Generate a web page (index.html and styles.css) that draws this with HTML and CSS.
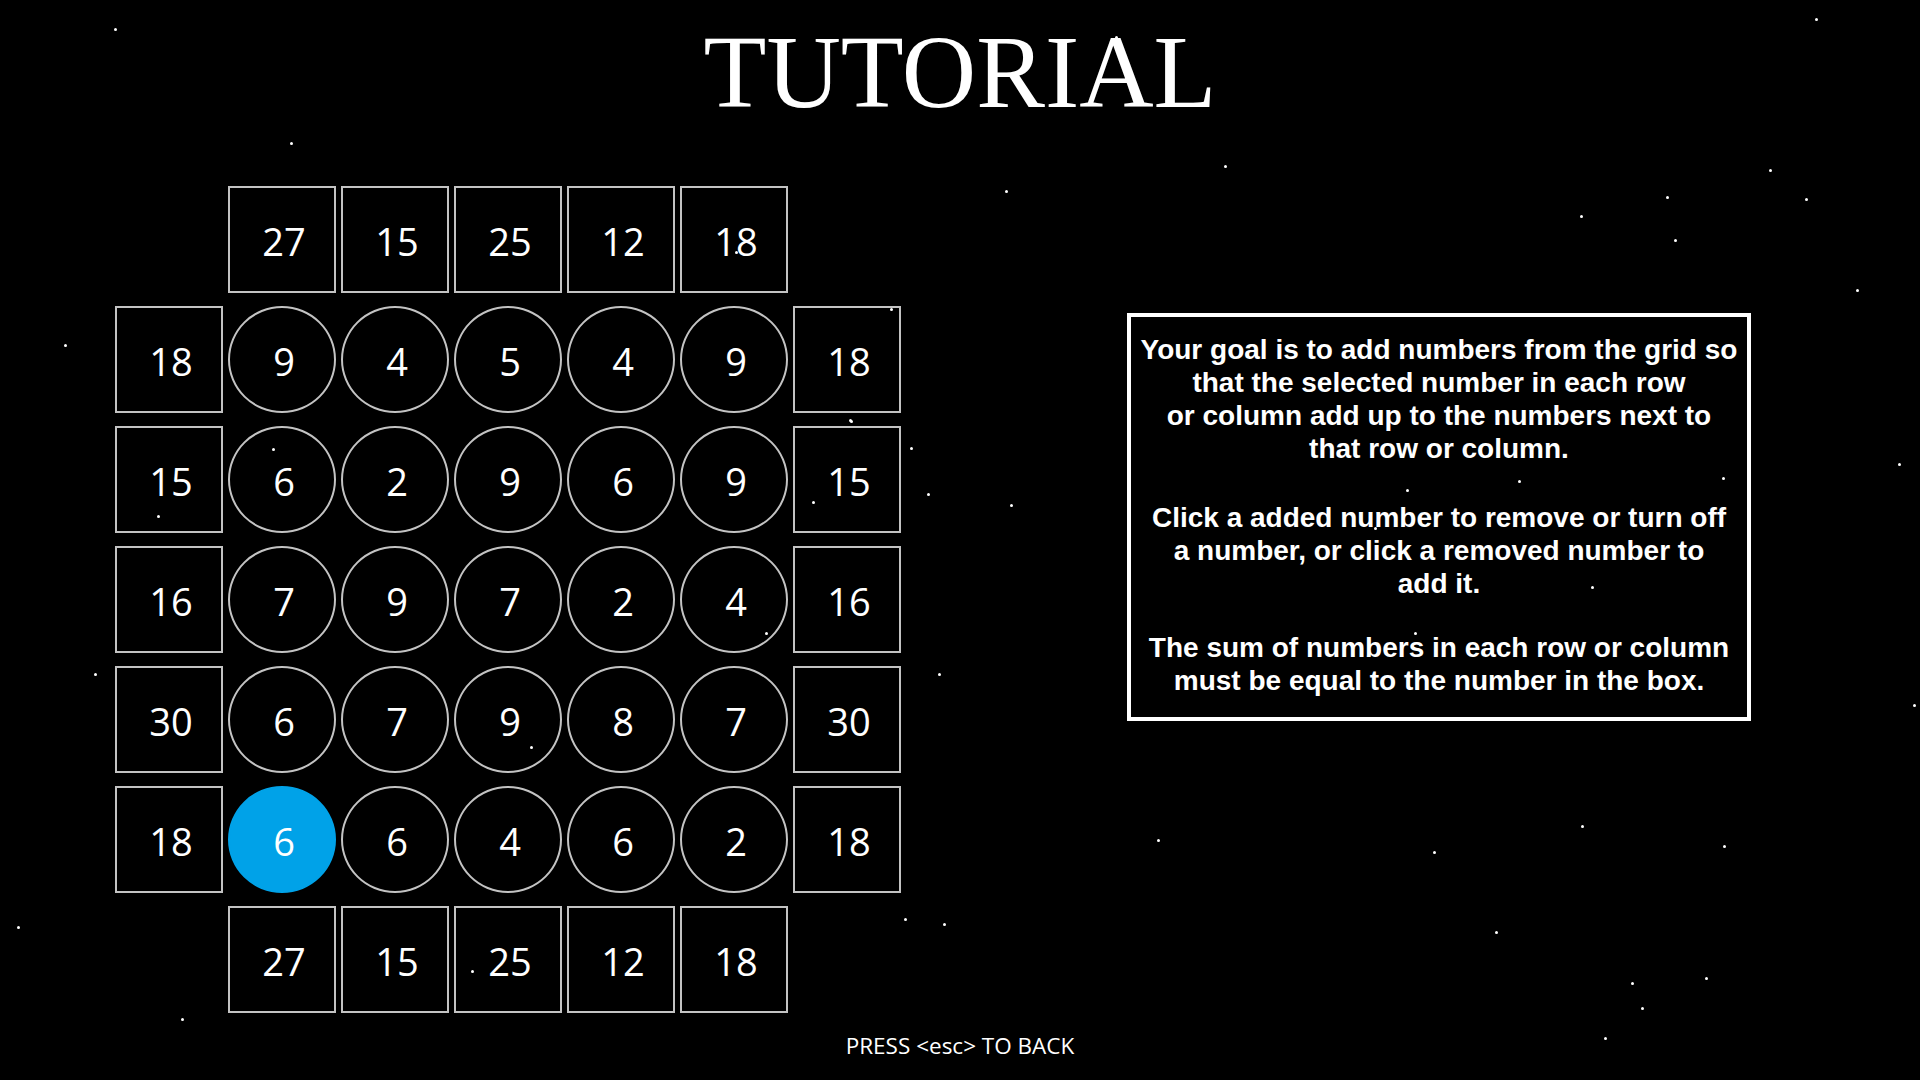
FILE: index.html
```html
<!DOCTYPE html>
<html lang="en">
<head>
<meta charset="utf-8">
<title>Tutorial</title>
<link rel="stylesheet" href="styles.css">
</head>
<body>
<div class="screen">
  <div class="stars">
    <span class="star" style="left:114px;top:28px"></span>
    <span class="star" style="left:1815px;top:18px"></span>
    <span class="star" style="left:1115px;top:36px"></span>
    <span class="star" style="left:290px;top:142px"></span>
    <span class="star" style="left:1224px;top:165px"></span>
    <span class="star" style="left:1005px;top:190px"></span>
    <span class="star" style="left:1769px;top:169px"></span>
    <span class="star" style="left:1805px;top:198px"></span>
    <span class="star" style="left:1666px;top:196px"></span>
    <span class="star" style="left:1580px;top:215px"></span>
    <span class="star" style="left:1674px;top:239px"></span>
    <span class="star" style="left:1856px;top:289px"></span>
    <span class="star" style="left:64px;top:344px"></span>
    <span class="star" style="left:850px;top:420px"></span>
    <span class="star" style="left:910px;top:447px"></span>
    <span class="star" style="left:927px;top:493px"></span>
    <span class="star" style="left:1010px;top:504px"></span>
    <span class="star" style="left:812px;top:501px"></span>
    <span class="star" style="left:157px;top:515px"></span>
    <span class="star" style="left:272px;top:448px"></span>
    <span class="star" style="left:1898px;top:463px"></span>
    <span class="star" style="left:1722px;top:477px"></span>
    <span class="star" style="left:1518px;top:480px"></span>
    <span class="star" style="left:1406px;top:489px"></span>
    <span class="star" style="left:1591px;top:586px"></span>
    <span class="star" style="left:1374px;top:527px"></span>
    <span class="star" style="left:1414px;top:632px"></span>
    <span class="star" style="left:765px;top:632px"></span>
    <span class="star" style="left:938px;top:673px"></span>
    <span class="star" style="left:94px;top:673px"></span>
    <span class="star" style="left:1913px;top:704px"></span>
    <span class="star" style="left:530px;top:746px"></span>
    <span class="star" style="left:1157px;top:839px"></span>
    <span class="star" style="left:1433px;top:851px"></span>
    <span class="star" style="left:1581px;top:825px"></span>
    <span class="star" style="left:1723px;top:845px"></span>
    <span class="star" style="left:17px;top:926px"></span>
    <span class="star" style="left:904px;top:918px"></span>
    <span class="star" style="left:943px;top:923px"></span>
    <span class="star" style="left:1495px;top:931px"></span>
    <span class="star" style="left:1631px;top:982px"></span>
    <span class="star" style="left:1705px;top:977px"></span>
    <span class="star" style="left:1641px;top:1007px"></span>
    <span class="star" style="left:1604px;top:1037px"></span>
    <span class="star" style="left:181px;top:1018px"></span>
    <span class="star" style="left:471px;top:970px"></span>
    <span class="star" style="left:735px;top:251px"></span>
    <span class="star" style="left:890px;top:308px"></span>
    <span class="star" style="left:849px;top:419px"></span>
  </div>

  <h1 class="title">TUTORIAL</h1>

  <main class="main">
    <div class="board">
      <div class="empty"></div>
      <div class="box">27</div><div class="box">15</div><div class="box">25</div><div class="box">12</div><div class="box">18</div>
      <div class="empty"></div>

      <div class="box">18</div>
      <div class="cell">9</div><div class="cell">4</div><div class="cell">5</div><div class="cell">4</div><div class="cell">9</div>
      <div class="box">18</div>

      <div class="box">15</div>
      <div class="cell">6</div><div class="cell">2</div><div class="cell">9</div><div class="cell">6</div><div class="cell">9</div>
      <div class="box">15</div>

      <div class="box">16</div>
      <div class="cell">7</div><div class="cell">9</div><div class="cell">7</div><div class="cell">2</div><div class="cell">4</div>
      <div class="box">16</div>

      <div class="box">30</div>
      <div class="cell">6</div><div class="cell">7</div><div class="cell">9</div><div class="cell">8</div><div class="cell">7</div>
      <div class="box">30</div>

      <div class="box">18</div>
      <div class="cell cell-selected">6</div><div class="cell">6</div><div class="cell">4</div><div class="cell">6</div><div class="cell">2</div>
      <div class="box">18</div>

      <div class="empty"></div>
      <div class="box">27</div><div class="box">15</div><div class="box">25</div><div class="box">12</div><div class="box">18</div>
      <div class="empty"></div>
    </div>

    <div class="info">
      <p class="info-goal">Your goal is to add numbers from the grid so<br>that the selected number in each row<br>or column add up to the numbers next to<br>that row or column.</p>
      <p class="info-click">Click a added number to remove or turn off<br>a number, or click a removed number to<br>add it.</p>
      <p class="info-sum">The sum of numbers in each row or column<br>must be equal to the number in the box.</p>
    </div>
  </main>

  <footer class="hint">PRESS &lt;esc&gt; TO BACK</footer>
</div>
</body>
</html>
```

FILE: styles.css
```css
html, body {
  margin: 0;
  padding: 0;
  background: #000;
}

.screen {
  position: relative;
  width: 1920px;
  height: 1080px;
  overflow: hidden;
  background: #000;
  color: #fff;
  display: flex;
  flex-direction: column;
}

.stars {
  position: absolute;
  inset: 0;
  pointer-events: none;
}

.star {
  position: absolute;
  width: 3px;
  height: 3px;
  border-radius: 50%;
  background: #fff;
}

.title {
  margin: 0;
  padding-top: 21px;
  font-family: "Liberation Serif", "Times New Roman", serif;
  font-weight: 400;
  font-size: 103px;
  line-height: 103px;
  text-align: center;
  color: #fff;
}

.main {
  display: flex;
  align-items: flex-start;
  margin-top: 62px;
  padding-left: 115px;
}

.board {
  display: grid;
  grid-template-columns: repeat(7, 108px);
  grid-template-rows: repeat(7, 107px);
  column-gap: 5px;
  row-gap: 13px;
}

.box,
.cell {
  box-sizing: border-box;
  display: flex;
  align-items: center;
  justify-content: center;
  padding-top: 3px;
  padding-left: 4px;
  border: 2px solid #c3c3c3;
  font-family: "Open Sans", "Noto Sans", sans-serif;
  font-size: 38px;
  color: #fff;
}

.box {
  background: #000;
}

.cell {
  border-radius: 50%;
  background: #000;
}

.cell-selected {
  background: #00a2e8;
  border-color: #00a2e8;
}

.info {
  margin-left: 226px;
  margin-top: 127px;
  width: 616px;
  padding: 16px 0 20px;
  border: 4px solid #fff;
  font-family: "Liberation Sans", Arial, sans-serif;
  font-weight: 700;
  font-size: 28px;
  line-height: 33px;
  text-align: center;
  color: #fff;
}

.info p {
  margin: 0;
}

.info-click {
  margin-top: 36px !important;
}

.info-sum {
  margin-top: 31px !important;
}

.hint {
  margin-top: 22px;
  font-family: "Open Sans", "Noto Sans", sans-serif;
  font-size: 22.5px;
  line-height: 22px;
  text-align: center;
  color: #fff;
}
```
